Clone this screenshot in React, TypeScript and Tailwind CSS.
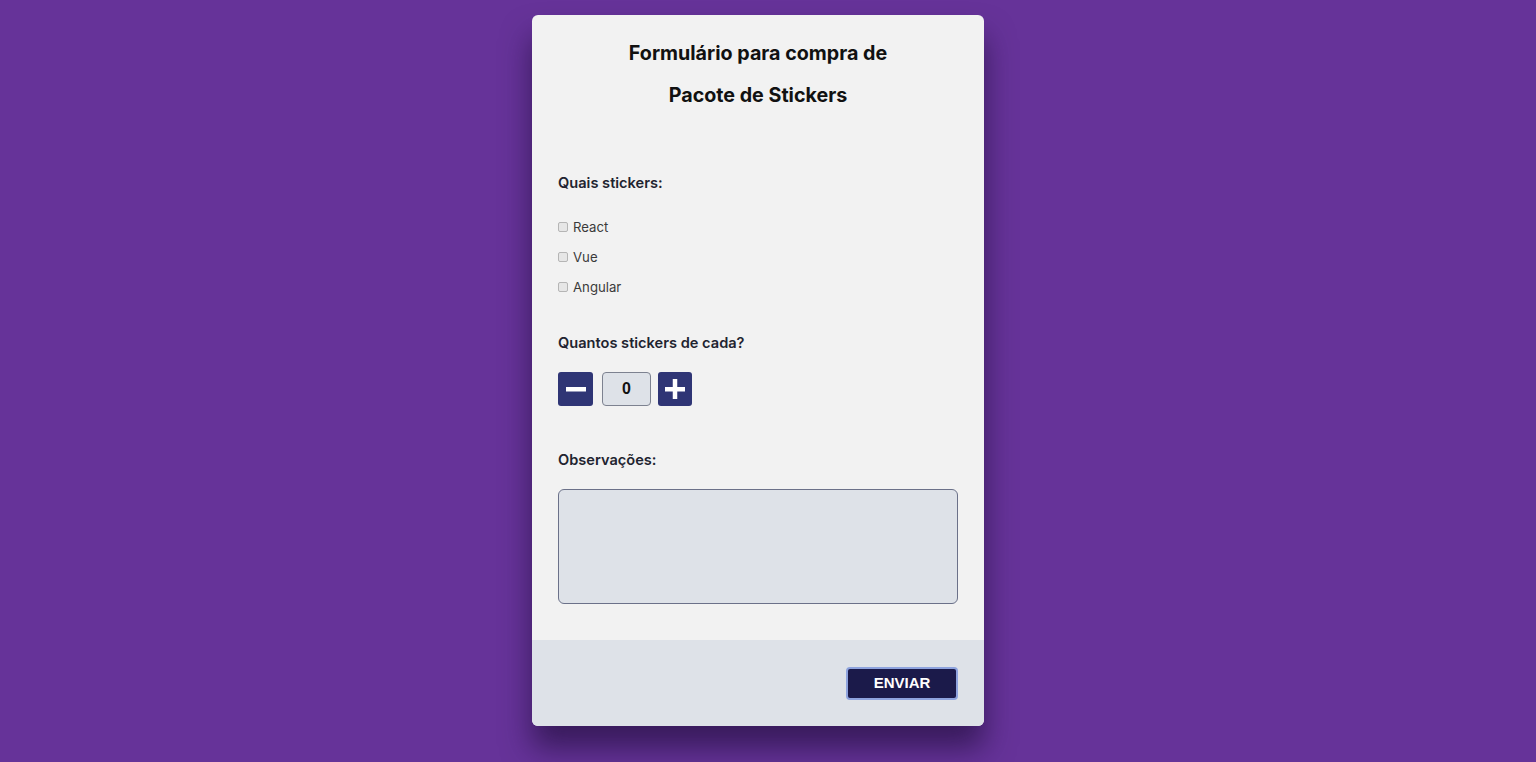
import React, { useState } from 'react';

const inter = { fontFamily: 'Inter, "Noto Sans", sans-serif' };

export default function App() {
  const [count, setCount] = useState(0);
  const [picked, setPicked] = useState<string[]>([]);
  const stickers = ['React', 'Vue', 'Angular'];

  const toggle = (name: string) =>
    setPicked((p) => (p.includes(name) ? p.filter((x) => x !== name) : [...p, name]));

  return (
    <main
      className="min-h-screen w-full bg-[#663399] flex justify-center pt-[15px] pb-[36px] pr-[20px]"
      style={inter}
    >
      <form className="w-[452px] h-[711px] flex flex-col rounded-md bg-[#f2f2f2] shadow-[0_22px_30px_rgba(25,10,50,0.6)] overflow-hidden">
        <div className="flex flex-col px-[26px] pt-[17px] pb-[36px] flex-1">
          <h1 className="text-center text-[19.7px] leading-[42px] font-bold text-[#111]">
            Formulário para compra de
            <br />
            Pacote de Stickers
          </h1>

          <p className="mt-[57px] text-[14.6px] leading-[20px] font-semibold text-[#1f2430]">
            Quais stickers:
          </p>

          <div className="flex flex-col mt-[20px]">
            {stickers.map((s) => (
              <label key={s} className="flex items-center h-[30px] text-[13.2px] text-[#3a3a3a]">
                <input
                  type="checkbox"
                  checked={picked.includes(s)}
                  onChange={() => toggle(s)}
                  className="appearance-none w-[10px] h-[10px] mr-[5px] -mt-[3px] rounded-[2px] border border-[#b5b5b5] bg-[#e6e6e6] checked:bg-[#2f3575]"
                />
                {s}
              </label>
            ))}
          </div>

          <p className="mt-[30px] text-[14.6px] leading-[20px] font-semibold text-[#1f2430]">
            Quantos stickers de cada?
          </p>

          <div className="flex items-center mt-[19px]">
            <button
              type="button"
              onClick={() => setCount((c) => Math.max(0, c - 1))}
              className="w-[35px] h-[34px] rounded-[3px] bg-[#2f3575] flex items-center justify-center"
            >
              <svg width="22" height="22" viewBox="0 0 22 22">
                <rect x="1" y="9" width="20" height="4.5" fill="#fff" />
              </svg>
            </button>
            <input
              type="text"
              readOnly
              value={count}
              className="ml-[9px] w-[49px] h-[34px] rounded-[4px] border border-[#7d8290] bg-[#dee2e8] text-center text-[16px] font-bold text-[#111] focus:outline-none"
              style={{ fontFamily: '"Liberation Sans", Arial, sans-serif' }}
            />
            <button
              type="button"
              onClick={() => setCount((c) => c + 1)}
              className="ml-[7px] w-[34px] h-[34px] rounded-[3px] bg-[#2f3575] flex items-center justify-center"
            >
              <svg width="22" height="22" viewBox="0 0 22 22">
                <rect x="1" y="9" width="20" height="4.5" fill="#fff" />
                <rect x="8.75" y="1" width="4.5" height="20" fill="#fff" />
              </svg>
            </button>
          </div>

          <p className="mt-[44px] text-[14.6px] leading-[20px] font-semibold text-[#1f2430]">
            Observações:
          </p>

          <textarea className="mt-[19px] w-[400px] h-[115px] rounded-md border border-[#6b7189] bg-[#dee2e8] resize-none focus:outline-none" />
        </div>

        <div className="h-[86px] bg-[#dee2e8] flex items-center justify-end px-[26px]">
          <button
            type="submit"
            onClick={(e) => e.preventDefault()}
            className="w-[112px] h-[33px] rounded-[4px] bg-[#1b1a4a] border-2 border-[#8ea3de] text-white text-[15px] font-bold"
            style={{ fontFamily: '"Liberation Sans", Arial, sans-serif' }}
          >
            ENVIAR
          </button>
        </div>
      </form>
    </main>
  );
}
